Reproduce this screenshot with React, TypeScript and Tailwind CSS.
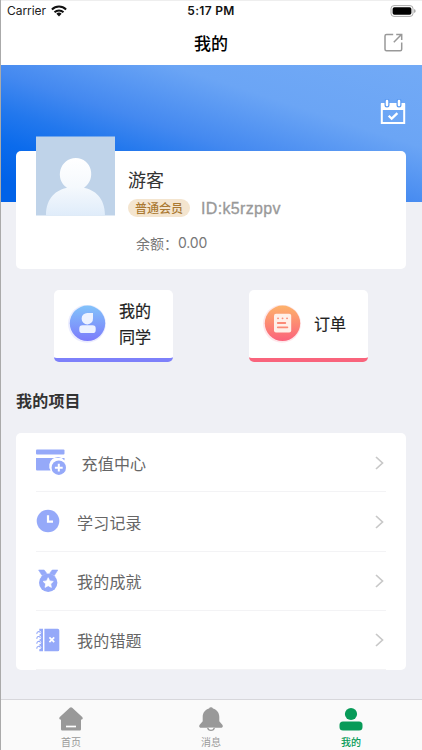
import React from "react";

const cardIcon = (
  <svg width="31" height="27" viewBox="0 0 31 27" fill="#95a9f9">
    <rect x="0" y="0.5" width="28.5" height="5" rx="1" />
    <path d="M0 9h28.5v2.4a8.6 8.6 0 0 0-13.9 10.1H1a1 1 0 0 1-1-1z" />
    <circle cx="22.8" cy="18.7" r="7.2" />
    <path d="M22.8 14.8v7.8M18.9 18.7h7.8" stroke="#fff" strokeWidth="2" />
  </svg>
);

const clockIcon = (
  <svg width="24" height="24" viewBox="0 0 24 24">
    <circle cx="12" cy="12" r="11.3" fill="#95a9f9" />
    <path d="M12 6.2v6.5h5" stroke="#fff" strokeWidth="2.2" fill="none" />
  </svg>
);

const medalIcon = (
  <svg width="24" height="24" viewBox="0 0 24 24" fill="#95a9f9">
    <path d="M2.6 1h5.6l2.6 3.4-4.7 2.2zM21.8 1h-5.6l-2.6 3.4 4.7 2.2z" stroke="#95a9f9" strokeLinejoin="round" strokeWidth="0.6" />
    <circle cx="12.2" cy="13.8" r="9.2" />
    <path d="m12.2 8.7 1.6 3.2 3.5.5-2.6 2.5.7 3.5-3.2-1.7L9 18.4l.7-3.5-2.6-2.5 3.5-.5z" fill="#fff" stroke="#fff" strokeLinejoin="round" strokeWidth="0.7" />
  </svg>
);

const bookIcon = (
  <svg width="24" height="24" viewBox="0 0 24 24" fill="#95a9f9">
    <path d="M3.3.8H7v22.5H3.3zM8.4.8h13.3a1.6 1.6 0 0 1 1.6 1.6v19.3a1.6 1.6 0 0 1-1.6 1.6H8.4z" />
    {[4.6, 9.5, 14.4, 19.3].map((y) => (
      <g key={y}>
        <circle cx="3.3" cy={y} r="1.9" fill="#fff" />
        <path d={`M1 ${y + 1.4}a1.8 1.8 0 1 1 3.4-1.2`} fill="none" stroke="#95a9f9" strokeWidth="1.1" />
      </g>
    ))}
    <path d="m13.4 9.4 4.8 4.8m0-4.8-4.8 4.8" stroke="#fff" strokeWidth="1.7" />
  </svg>
);

const rows = [
  { label: "充值中心", icon: cardIcon, box: "w-[45.5px] pt-[1px]" },
  { label: "学习记录", icon: clockIcon, box: "w-[41px]" },
  { label: "我的成就", icon: medalIcon, box: "w-[41px]" },
  { label: "我的错题", icon: bookIcon, box: "w-[41px]" },
];

function StatusBar() {
  return (
    <div className="grid h-[20px] grid-cols-3 items-center pl-[6px] pr-[6px] font-['Inter','Liberation_Sans',sans-serif] text-[12px] text-[#222]">
      <div className="flex items-center gap-[5px]">
        <span className="tracking-[-0.05px]">Carrier</span>
        <svg width="16" height="12" viewBox="0 0 16 12" fill="none" stroke="#111" strokeWidth="2">
          <path d="M.9 4.5a10.2 10.2 0 0 1 14.2 0M3.5 7.2a6.5 6.5 0 0 1 9 0" />
          <path d="M5.4 8.8a3.8 3.8 0 0 1 5.2 0L8 11.4z" fill="#111" stroke="none" />
        </svg>
      </div>
      <span className="-ml-[1px] whitespace-nowrap text-center font-semibold tracking-[0.3px] text-[#111]">5:17 PM</span>
      <svg className="justify-self-end" width="26" height="12" viewBox="0 0 26 12">
        <rect x="1" y=".6" width="22" height="10.8" rx="3" fill="#fff" stroke="#aaa" />
        <rect x="2.6" y="2.2" width="18.8" height="7.6" rx="1.8" fill="#000" />
        <path d="M24.2 4v4q1.4-.6 1.4-2T24.2 4" fill="#999" />
      </svg>
    </div>
  );
}

export default function App() {
  return (
    <div className="flex h-[750px] w-[422px] flex-col overflow-hidden border-l border-[#aaa] bg-[#eff0f5] font-['Noto_Sans_CJK_SC',sans-serif]">
      <header className="h-[65px] shrink-0 border-t border-[#eee] bg-white">
        <StatusBar />
        <div className="grid h-[43px] grid-cols-[1fr_auto_1fr] items-center pr-[19px]">
          <span />
          <h1 className="pl-[18px] text-[17px] font-medium leading-[24px] text-black">我的</h1>
          <svg className="justify-self-end" width="19" height="19" viewBox="0 0 19 19" fill="none" stroke="#999" strokeWidth="1.5">
            <path d="M9.2 1.4H2.5a1.5 1.5 0 0 0-1.5 1.5v13.3a1.5 1.5 0 0 0 1.5 1.5h13.7a1.5 1.5 0 0 0 1.5-1.5V9.5M9.8 9.2 17.2 1.8M12.2 1.4h5.5V7" />
          </svg>
        </div>
      </header>

      <section className="flex h-[137px] shrink-0 justify-end bg-[linear-gradient(to_top_right,#0062e8_8%,#0b6bec_22%,#2378ed_34%,#4489f0_47%,#6ba5f5_70%,#72aaf6)] pr-[16px] pt-[34px]">
        <svg width="26" height="27" viewBox="0 0 26 27" fill="none">
          <path d="M1.8 5.5h22.4v18.6H1.8z" stroke="#fff" strokeWidth="2" />
          <path d="M1 4h24v7H1z" fill="#fff" />
          <path d="M7 2v4M19 2v4" stroke="#5c9cf3" strokeWidth="5" strokeLinecap="round" />
          <path d="M7 2v4M19 2v4" stroke="#fff" strokeWidth="2.5" strokeLinecap="round" />
          <path d="m8.7 16.7 3 3 5.7-5.5" stroke="#fff" strokeWidth="2.3" />
        </svg>
      </section>

      <section className="ml-[15px] mr-[16px] -mt-[51px] flex h-[118px] shrink-0 rounded-[5px] bg-white pl-[20px]">
        <svg className="-mt-[15px] mr-[13px] shrink-0" width="79" height="80" viewBox="0 0 79 80">
          <defs>
            <linearGradient id="person" x1="0" y1="22" x2="0" y2="80" gradientUnits="userSpaceOnUse">
              <stop stopColor="#fff" />
              <stop offset=".5" stopColor="#f5f9fd" />
              <stop offset="1" stopColor="#dfecfa" />
            </linearGradient>
          </defs>
          <path d="M0 .5h79v79H0z" fill="#bfd3e9" />
          <path d="M10 79.5C10 61 21 54 31 51.8 18 43 24 22 39.8 22S61 43 48 51.8C58 54 69 61 69 79.5z" fill="url(#person)" />
        </svg>
        <div className="pt-[15px]">
          <div className="text-[18px] leading-[26px] text-[#333]">游客</div>
          <div className="mt-[4px] flex h-[24px] items-center">
            <span className="flex h-[18px] w-[62px] items-center justify-center rounded-full bg-[#f4e5cf] text-[12px] font-medium leading-[18px] text-[#aa7932]">普通会员</span>
            <span className="ml-[11px] pt-[1px] font-['Liberation_Sans',sans-serif] text-[16px] leading-[20px] tracking-[0.35px] text-[#999] [-webkit-text-stroke:0.3px_#999]">ID:k5rzppv</span>
          </div>
          <div className="mt-[13px] flex pl-[8px] text-[14px] leading-[20px] text-[#777]">
            <span>余额：</span>
            <span className="font-['Inter','Liberation_Sans',sans-serif] tracking-[-0.2px]">0.00</span>
          </div>
        </div>
      </section>

      <section className="mt-[21px] flex shrink-0 gap-[76px] pl-[53px]">
        <div className="flex h-[72px] w-[119px] items-center rounded-[5px] border-b-[4px] border-[#7d80fa] bg-white pl-[14px]">
          <svg width="38" height="39" viewBox="0 0 38 39">
            <defs>
              <linearGradient id="blue" x1="0" y1="0" x2="0" y2="1"><stop stopColor="#82c3fa" /><stop offset="1" stopColor="#7b7bfb" /></linearGradient>
            </defs>
            <circle cx="19" cy="18.7" r="19" fill="#8588fb" opacity=".16" />
            <circle cx="19.5" cy="18.3" r="17.7" fill="url(#blue)" />
            <path d="M19.5 8H25v5.3a5.7 5.7 0 1 1-5.5-5.3" fill="#edf2ff" />
            <rect x="11.3" y="20.2" width="16.4" height="7.9" rx="3.2" fill="#edf2ff" />
          </svg>
          <span className="ml-[13px] w-[34px] pb-[2px] text-[16px] leading-[26px] text-[#222] [-webkit-text-stroke:0.2px_#222]">我的同学</span>
        </div>
        <div className="flex h-[72px] w-[119px] items-center rounded-[5px] border-b-[4px] border-[#f9647c] bg-white pl-[14px]">
          <svg width="38" height="39" viewBox="0 0 38 39">
            <defs>
              <linearGradient id="red" x1="0" y1="0" x2="0" y2="1"><stop stopColor="#fdb36b" /><stop offset="1" stopColor="#fb627b" /></linearGradient>
            </defs>
            <circle cx="19" cy="18.7" r="19" fill="#fb667d" opacity=".16" />
            <circle cx="19.5" cy="18.3" r="17.7" fill="url(#red)" />
            <rect x="11" y="8.8" width="17.2" height="18.8" rx="2" fill="#fff0e9" />
            <path d="M15 13.3h.1m4.4 0h.1m4.4 0h.1M14.8 18h7.5M14.8 22.3h9.6" stroke="#fb8b78" strokeWidth="1.8" strokeLinecap="round" />
          </svg>
          <span className="ml-[13px] pb-[2px] text-[16px] leading-[26px] text-[#222] [-webkit-text-stroke:0.2px_#222]">订单</span>
        </div>
      </section>

      <h2 className="mt-[26px] shrink-0 pl-[15px] text-[16px] font-bold leading-[24px] tracking-[0.2px] text-[#333]">我的项目</h2>

      <section className="ml-[15px] mr-[16px] mt-[21px] h-[237px] shrink-0 rounded-[5px] bg-white px-[20px]">
        {rows.map((row) => (
          <div key={row.label} className="flex h-[59.25px] items-center border-b border-[#f3f3f5]">
            <span className={`shrink-0 ${row.box}`}>{row.icon}</span>
            <span className="pt-[1px] text-[16px] leading-[24px] tracking-[0.2px] text-[#666]">{row.label}</span>
            <svg className="ml-auto mr-[2px] mt-[1px]" width="9" height="14" viewBox="0 0 9 14" fill="none" stroke="#c8c8c8" strokeWidth="1.7">
              <path d="m1 1 6.5 6L1 13" />
            </svg>
          </div>
        ))}
      </section>

      <nav className="mt-auto grid h-[51px] shrink-0 grid-cols-3 border-t border-[#d7d7db] bg-[#fafafa] pr-[1px] text-[10px] leading-[14px] text-[#999]">
        <div className="flex flex-col items-center gap-[4px] pt-[7px]">
          <svg width="24" height="24" viewBox="0 0 24 24" fill="#999">
            <path d="M10.8.8a1.7 1.7 0 0 1 2.4 0l10 9.3c1.1 1.2.5 2.6-1.2 2.6v9.6a1.2 1.2 0 0 1-1.2 1.2H3.2A1.2 1.2 0 0 1 2 22.3v-9.6c-1.7 0-2.3-1.4-1.2-2.6z" />
            <path d="M7 19.5h10" stroke="#fff" strokeWidth="1.7" />
          </svg>
          <span>首页</span>
        </div>
        <div className="flex flex-col items-center gap-[4px] pt-[7px]">
          <svg width="24" height="24" viewBox="0 0 24 24" fill="#999">
            <path d="M10 1.6a2.2 2.2 0 0 1 4 0c4.1 1.2 6.3 4.5 6.3 8.5v4.1l3 3.6c1.1 1.5.4 2.9-1.4 2.9H2.1c-1.8 0-2.5-1.4-1.4-2.9l3-3.6v-4.1c0-4 2.2-7.3 6.3-8.5" />
            <path d="M8.7 20.8c.6 3.3 6 3.3 6.6 0" stroke="#999" strokeWidth="1.3" fill="#fff" />
          </svg>
          <span>消息</span>
        </div>
        <div className="flex flex-col items-center gap-[4px] pt-[7px] font-medium text-[#079a58]">
          <svg width="24" height="24" viewBox="0 0 24 24" fill="#079a58">
            <circle cx="12" cy="7" r="6.1" />
            <rect x=".5" y="14.4" width="23" height="9" rx="3.5" />
          </svg>
          <span>我的</span>
        </div>
      </nav>
    </div>
  );
}
